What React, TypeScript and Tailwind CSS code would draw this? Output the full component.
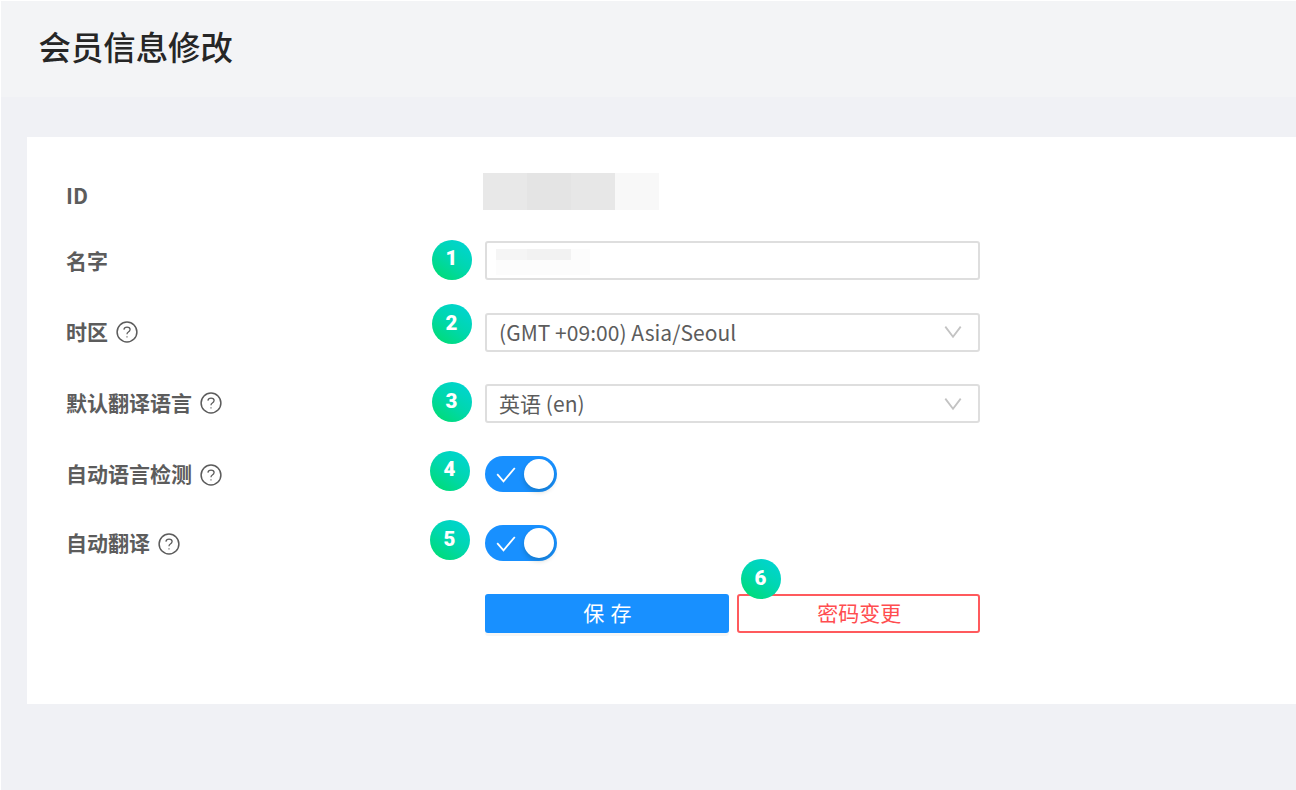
import type { ReactNode } from "react";

function Badge({ n, className }: { n: number; className: string }) {
  return (
    <span
      className={`absolute flex size-10 items-center justify-center rounded-full bg-linear-[35deg,#00dc78_10%,#00d7ae_50%,#00d4d0_90%] pr-px pb-0.5 font-['Roboto',sans-serif] text-[20.5px] leading-none font-black text-white ${className}`}
    >
      {n}
    </span>
  );
}

function HelpIcon() {
  return (
    <svg className="ml-2 size-[22px] shrink-0" viewBox="0 0 22 22" fill="none" stroke="#5c5c5c">
      <circle cx="11" cy="11" r="9.9" strokeWidth="1.5" />
      <path d="M7.9 8.7C8.1 7 9.3 6.1 11 6.1C12.9 6.1 14.1 7.2 14.1 8.6C14.1 9.9 13.2 10.6 12.1 11.2C11.2 11.7 11 12.2 11 13.2" strokeWidth="1.3" />
      <path d="M11 15.3v1.3" strokeWidth="1.1" />
    </svg>
  );
}

function Row({ label, help, height, shift = "", children }: { label: string; help?: boolean; height: string; shift?: string; children: ReactNode }) {
  return (
    <div className={`flex items-center ${height}`}>
      <div className={`flex w-[419px] items-center font-bold ${shift}`}>
        <span className="pb-0.5">{label}</span>
        {help && <HelpIcon />}
      </div>
      <div className="relative">{children}</div>
    </div>
  );
}

function Select({ value }: { value: string }) {
  return (
    <div className="flex h-[39px] w-[495px] items-center justify-between rounded-[3px] border-2 border-[#dedede] pr-4 pl-3">
      <span className="tracking-[0.04px]">{value}</span>
      <svg className="h-[14px] w-[18px]" viewBox="0 0 18 14" fill="none" stroke="#c3c3c3" strokeWidth="1.8">
        <path d="M1.3 1.6 9 11.8 16.7 1.6" />
      </svg>
    </div>
  );
}

function Toggle() {
  return (
    <div className="flex h-9 w-[71.5px] items-center justify-between rounded-full bg-[#1890ff] pr-[3px] pl-[11px]">
      <svg className="mt-0.5 h-4 w-5" viewBox="0 0 20 16" fill="none" stroke="white" strokeWidth="1.8">
        <path d="M1.2 7.2 7.5 14.3 18.8 1" />
      </svg>
      <span className="size-[30px] rounded-full bg-white shadow-[0_3px_5px_rgba(0,35,11,0.2)]" />
    </div>
  );
}

export default function App() {
  return (
    <div className="h-[790px] w-[1296px] overflow-hidden bg-white pt-px pl-px font-['Noto_Sans_CJK_SC',sans-serif] text-[21px] leading-none text-[#5c5c5c]">
      <div className="flex h-full flex-col bg-[#f0f1f5]">
        <header className="flex h-24 items-center bg-[#f3f4f6] pb-[5px] pl-[37.5px]">
          <h1 className="text-[32.4px] font-medium text-[#262626]">会员信息修改</h1>
        </header>
        <main className="mt-10 ml-[26px] h-[567px] bg-white pt-[23px] pl-[39px]">
          <Row label="ID" height="h-[65px]" shift="pt-2">
            <div className="mb-0.5 -ml-0.5 flex h-[37px]">
              <div className="w-11 bg-[#e8e8e8]" />
              <div className="w-11 bg-[#e4e4e4]" />
              <div className="w-11 bg-[#e7e7e7]" />
              <div className="w-11 bg-[#f8f8f8]" />
            </div>
          </Row>
          <Row label="名字" height="h-[71px]" shift="pt-px">
            <div className="h-[39px] w-[495px] rounded-[3px] border-2 border-[#dedede] pt-1.5 pl-[9px]">
              <div className="h-[26px] w-[94px] bg-[#fcfcfc]">
                <div className="flex h-[11px]">
                  <div className="w-[31px] bg-[#f5f5f5]" />
                  <div className="w-11 bg-[#f2f2f2]" />
                </div>
              </div>
            </div>
            <Badge n={1} className="top-[-1.5px] left-[-53px]" />
          </Row>
          <Row label="时区" help height="h-[72px]">
            <Select value="(GMT +09:00) Asia/Seoul" />
            <Badge n={2} className="top-[-8.5px] left-[-53px]" />
          </Row>
          <Row label="默认翻译语言" help height="h-[71px]" shift="pb-px">
            <Select value="英语 (en)" />
            <Badge n={3} className="top-[-2px] left-[-53px]" />
          </Row>
          <Row label="自动语言检测" help height="h-[69px]" shift="pt-0.5">
            <Toggle />
            <Badge n={4} className="top-[-5px] left-[-55px]" />
          </Row>
          <Row label="自动翻译" help height="h-[70px]" shift="pt-px">
            <Toggle />
            <Badge n={5} className="top-[-5px] left-[-55px]" />
          </Row>
          <div className="relative mt-4 ml-[419px] flex w-[495px] justify-between">
            <button className="h-[38.5px] w-[243.5px] rounded-[3px] bg-[#1890ff] pb-0.5 pl-0.5 text-white shadow-[0_3px_0_rgba(0,0,0,0.035)]">
              <span className="tracking-[0.8px]">保 存</span>
            </button>
            <button className="h-[38.5px] w-[243.5px] rounded-[3px] border-2 border-[#ff5a5d] pb-0.5 pl-0.5 text-[#ff4d4f]">密码变更</button>
            <Badge n={6} className="top-[-35px] left-[256px]" />
          </div>
        </main>
      </div>
    </div>
  );
}
